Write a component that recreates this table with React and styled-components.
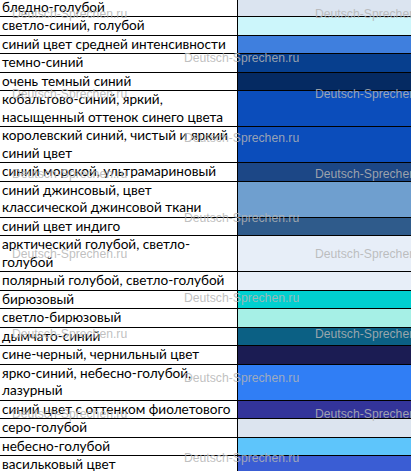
import styled, { createGlobalStyle } from 'styled-components';

const GlobalStyle = createGlobalStyle`
  html, body {
    margin: 0;
    padding: 0;
    background: #fff;
    overflow: hidden;
  }
`;

const Page = styled.div`
  position: relative;
  width: 411px;
  height: 471px;
  overflow: hidden;
`;

const Sheet = styled.div`
  display: grid;
  grid-template-columns: 237px 1px 1fr;
  margin-top: -1.5px;
  font-family: Lato, 'Liberation Sans', sans-serif;
  font-size: 13.6px;
  line-height: 17.5px;
  color: #000;
`;

const NameCell = styled.div`
  padding: 0 0 0 2px;
  background: #fff;
  border-bottom: 1px solid #000;
  white-space: pre;
  overflow: hidden;
`;

const Divider = styled.div`
  background: #000;
`;

const Swatch = styled.div`
  background: ${p => p.$color};
  border-bottom: 1px solid #000;
`;

const Watermark = styled.div`
  position: absolute;
  left: ${p => p.$x}px;
  top: ${p => p.$y - 7}px;
  font-family: 'Liberation Sans', Arial, sans-serif;
  font-size: 12.2px;
  line-height: 14px;
  color: rgba(180, 180, 180, 0.85);
  white-space: nowrap;
  pointer-events: none;
`;

const COLORS = [
  ['бледно-голубой', '#dbe4f0'],
  ['светло-синий, голубой', '#ccf6fb'],
  ['синий цвет средней интенсивности', '#3f7fde'],
  ['темно-синий', '#073f8e'],
  ['очень темный синий', '#052a62'],
  ['кобальтово-синий, яркий,\nнасыщенный оттенок синего цвета', '#0b4dbb'],
  ['королевский синий, чистый и яркий\nсиний цвет', '#0b4dbb'],
  ['синий морской, ультрамариновый', '#1c4786'],
  ['синий джинсовый, цвет\nклассической джинсовой ткани', '#6f9fcf'],
  ['синий цвет индиго', '#2f5b8b'],
  ['арктический голубой, светло-\nголубой', '#e7eef8'],
  ['полярный голубой, светло-голубой', '#e7eef8'],
  ['бирюзовый', '#00d0d0'],
  ['светло-бирюзовый', '#a6f0e6'],
  ['дымчато-синий', '#0b6084'],
  ['сине-черный, чернильный цвет', '#1b1c53'],
  ['ярко-синий, небесно-голубой,\nлазурный', '#307ef5'],
  ['синий цвет с оттенком фиолетового', '#33349a'],
  ['серо-голубой', '#dce4ef'],
  ['небесно-голубой', '#5ec5fb'],
  ['васильковый цвет', '#3a5dd4'],
];

const marks = [];
for (let k = 0; k < 6; k++) {
  marks.push({ x: 12, y: 14 + k * 80 });
  marks.push({ x: 315, y: 14 + k * 80 });
  marks.push({ x: 184, y: 58 + k * 80 });
}

export default function App() {
  return (
    <Page>
      <GlobalStyle />
      <Sheet>
        {COLORS.map(([name, color], i) => [
          <NameCell key={`n${i}`}>{name}</NameCell>,
          <Divider key={`d${i}`} />,
          <Swatch key={`s${i}`} $color={color} />,
        ])}
      </Sheet>
      {marks.map((m, i) => (
        <Watermark key={i} $x={m.x} $y={m.y}>Deutsch-Sprechen.ru</Watermark>
      ))}
    </Page>
  );
}
